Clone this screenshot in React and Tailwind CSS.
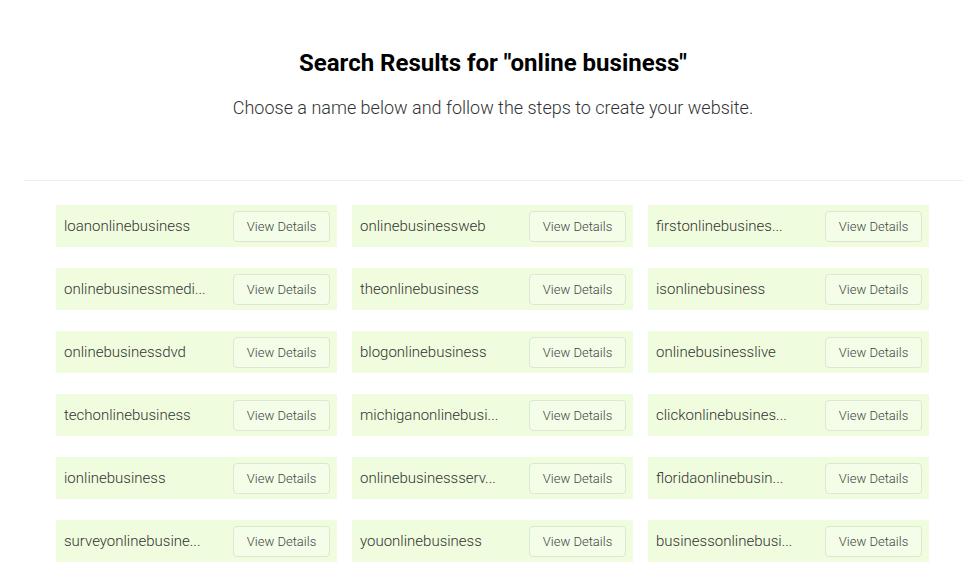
const NAMES = [
  "loanonlinebusiness", "onlinebusinessweb", "firstonlinebusines...",
  "onlinebusinessmedi...", "theonlinebusiness", "isonlinebusiness",
  "onlinebusinessdvd", "blogonlinebusiness", "onlinebusinesslive",
  "techonlinebusiness", "michiganonlinebusi...", "clickonlinebusines...",
  "ionlinebusiness", "onlinebusinessserv...", "floridaonlinebusin...",
  "surveyonlinebusine...", "youonlinebusiness", "businessonlinebusi...",
];

export default function App() {
  return (
    <div className="w-[974px] h-[578px] overflow-hidden bg-white font-['Roboto',sans-serif]">
      <div className="pt-[48px] pl-[12px] text-center">
        <h1 className="text-[24px] leading-[30px] font-bold text-black">Search Results for "online business"</h1>
        <p className="mt-[17px] text-[18px] leading-[26px] font-light text-[#333]">
          Choose a name below and follow the steps to create your website.
        </p>
      </div>
      <div className="ml-[24px] w-[939px] mt-[59px] border-t border-[#efefef]">
        <div className="ml-[32px] w-[873px] pt-[24px] grid grid-cols-3 gap-x-[15px] gap-y-[21px]">
          {NAMES.map(n => (
            <div key={n} className="h-[42px] bg-[#f0fcde] flex items-center justify-between pl-[8px] pr-[7px]">
              <span className="text-[15px] font-light text-[#333]">{n}</span>
              <button className="h-[31px] w-[97px] pt-[2px] rounded-[4px] border border-[#dde6d2] bg-[#f3fde7] text-[13px] font-light text-[#444]">
                View Details
              </button>
            </div>
          ))}
        </div>
      </div>
    </div>
  );
}
